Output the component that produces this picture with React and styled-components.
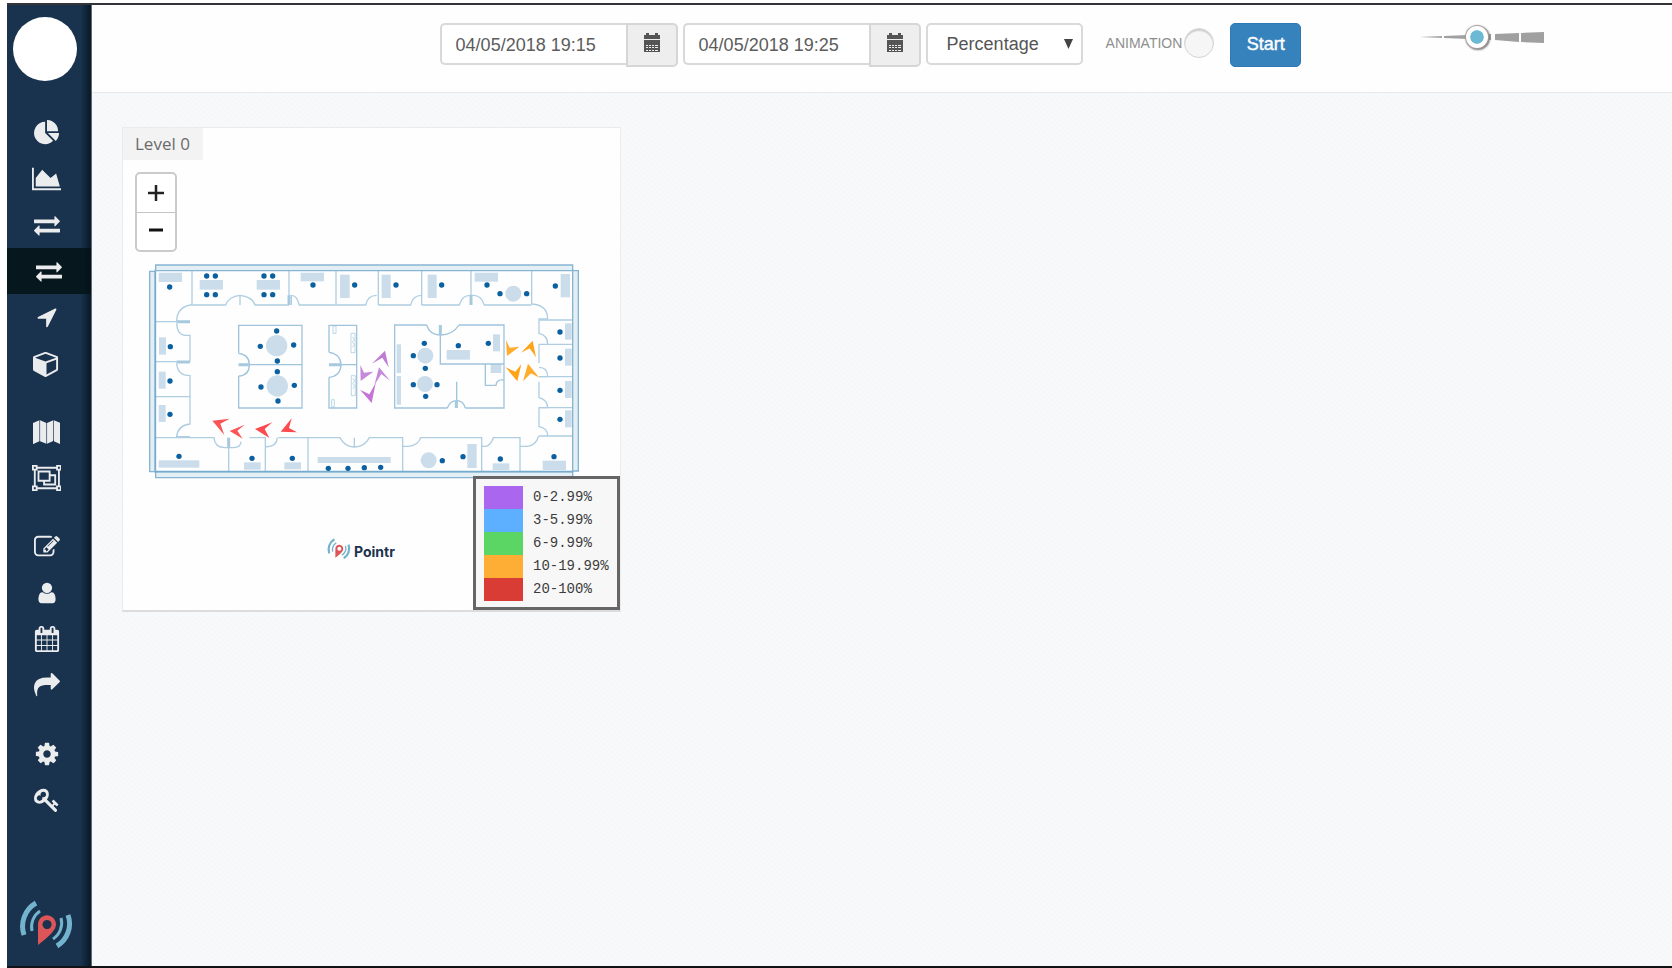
import React from "react";
import styled, { createGlobalStyle, css } from "styled-components";

const GlobalStyle = createGlobalStyle`
  *, *::before, *::after { box-sizing: border-box; }
  body {
    margin: 0;
    background: #fff;
    font-family: "Liberation Sans", Arial, sans-serif;
    color: #555;
  }
`;

const ICONS = {
  pie: { w: 1792, d: "M768 890l546 546q-106 108-247.5 168t-298.5 60q-209 0-385.5-103t-279.5-279.5-103-385.5 103-385.5 279.5-279.5 385.5-103v762zm187 6h773q0 157-60 298.5t-168 247.5zm709-128h-768v-768q209 0 385.5 103t279.5 279.5 103 385.5z" },
  area: { w: 2048, d: "M2048 1536v128h-2048v-1536h128v1408h1920zm-384-1024l256 896h-1664v-576l448-576 576 576z" },
  exchange: { w: 1792, d: "M1792 1184v192q0 13-9.5 22.5t-22.5 9.5h-1376v192q0 13-9.5 22.5t-22.5 9.5q-12 0-24-10l-319-320q-9-9-9-22 0-14 9-23l320-320q9-9 23-9 13 0 22.5 9.5t9.5 22.5v192h1376q13 0 22.5 9.5t9.5 22.5zm0-544q0 14-9 23l-320 320q-9 9-23 9-13 0-22.5-9.5t-9.5-22.5v-192h-1376q-13 0-22.5-9.5t-9.5-22.5v-192q0-13 9.5-22.5t22.5-9.5h1376v-192q0-14 9-23t23-9q12 0 24 10l319 319q9 9 9 23z" },
  arrow: { w: 1792, h: 24, d: "M1593 349l-640 1280q-17 35-57 35-5 0-15-2-22-5-35.5-22.5t-13.5-39.5v-576h-576q-22 0-39.5-13.5t-22.5-35.5 4-42 29-30l1280-640q13-7 29-7 27 0 45 19 15 14 18.5 34.5t-6.5 39.5z" },
  cube: { w: 1792, h: 27, d: "M896 1629l640-349v-636l-640 233v752zm-64-865l698-254-698-254-698 254zm832-252v768q0 35-18 65t-49 47l-704 384q-28 16-61 16t-61-16l-704-384q-31-17-49-47t-18-65v-768q0-40 23-73t61-47l704-256q22-8 44-8t44 8l704 256q38 14 61 47t23 73z" },
  map: { w: 2048, h: 24, d: "M0 220L480 20V1580L20 1790Q0 1790 0 1770ZM530 10L1000 220V1780L530 1580ZM1050 220L1510 10V1570L1050 1780ZM1560 20L2048 220V1770Q2048 1790 2028 1790L1560 1580Z" },
  group: { w: 2048, d: "M2048 384h-128v1024h128v384h-384v-128h-1280v128h-384v-384h128v-1024h-128v-384h384v128h1280v-128h384zM1792 128v128h128v-128zM128 128v128h128v-128zM256 1664v-128h-128v128zM1664 1536v-128h128v-1024h-128v-128h-1280v128h-128v1024h128v128zM1920 1664v-128h-128v128zM1280 640h384v768h-896v-256h-384v-768h896zM512 1024h640v-512h-640zM1536 1280v-512h-256v384h-384v128z" },
  edit: { w: 1792, d: "M888 1184l116-116-152-152-116 116v56h96v96h56zm440-720q-16-16-33 1l-350 350q-17 17-1 33t33-1l350-350q17-17 1-33zm80 594v190q0 119-84.5 203.5t-203.5 84.5h-832q-119 0-203.5-84.5t-84.5-203.5v-832q0-119 84.5-203.5t203.5-84.5h832q63 0 117 25 15 7 18 23 3 17-9 29l-49 49q-14 14-32 8-23-6-45-6h-832q-66 0-113 47t-47 113v832q0 66 47 113t113 47h832q66 0 113-47t47-113v-126q0-13 9-22l64-64q15-15 35-7t20 29zm-96-738l288 288-672 672h-288v-288zm444 132l-92 92-288-288 92-92q28-28 68-28t68 28l152 152q28 28 28 68t-28 68z" },
  user: { w: 1792, h: 24, d: "M1536 1399q0 109-62.5 187t-150.5 78h-854q-88 0-150.5-78t-62.5-187q0-85 8.5-160.5t31.5-152 58.5-131 94-89 134.5-34.5q131 128 313 128t313-128q76 0 134.5 34.5t94 89 58.5 131 31.5 152 8.5 160.5zm-256-887q0 159-112.5 271.5t-271.5 112.5-271.5-112.5-112.5-271.5 112.5-271.5 271.5-112.5 271.5 112.5 112.5 271.5z" },
  calendar: { w: 1792, d: "M192 1664h288v-288h-288v288zm352 0h320v-288h-320v288zm-352-352h288v-320h-288v320zm352 0h320v-320h-320v320zm-352-384h288v-288h-288v288zm736 736h320v-288h-320v288zm-384-736h320v-288h-320v288zm768 736h288v-288h-288v288zm-384-352h320v-320h-320v320zm-352-864v-288q0-13-9.5-22.5t-22.5-9.5h-64q-13 0-22.5 9.5t-9.5 22.5v288q0 13 9.5 22.5t22.5 9.5h64q13 0 22.5-9.5t9.5-22.5zm736 864h288v-320h-288v320zm-384-384h320v-288h-320v288zm384 0h288v-288h-288v288zm32-480v-288q0-13-9.5-22.5t-22.5-9.5h-64q-13 0-22.5 9.5t-9.5 22.5v288q0 13 9.5 22.5t22.5 9.5h64q13 0 22.5-9.5t9.5-22.5zm384-64v1280q0 52-38 90t-90 38h-1408q-52 0-90-38t-38-90v-1280q0-52 38-90t90-38h128v-96q0-66 47-113t113-47h64q66 0 113 47t47 113v96h384v-96q0-66 47-113t113-47h64q66 0 113 47t47 113v96h128q52 0 90 38t38 90z" },
  share: { w: 1792, d: "M1792 640q0 26-19 45l-512 512q-19 19-45 19t-45-19-19-45v-256h-224q-98 0-175.5 6t-154 21.5-133 42.5-105.5 69.5-80 101-48.5 138.5-17.5 181q0 55 5 123 0 6 2.5 23.5t2.5 26.5q0 15-8.5 25t-23.5 10q-16 0-28-17-7-9-13-22t-13.5-30-10.5-24q-127-285-127-451 0-199 53-333 162-403 875-403h224v-256q0-26 19-45t45-19 45 19l512 512q19 19 19 45z" },
  cog: { w: 1792, d: "M1152 896q0-106-75-181t-181-75-181 75-75 181 75 181 181 75 181-75 75-181zm512-109v222q0 12-8 23t-20 13l-185 28q-19 54-39 91 35 50 107 138 10 12 10 25t-9 23q-27 37-99 108t-94 71q-12 0-26-9l-138-108q-44 23-91 38-16 136-29 186-7 28-36 28h-222q-14 0-24.5-8.5t-11.5-21.5l-28-184q-49-16-90-37l-141 107q-10 9-25 9-14 0-25-11-126-114-165-168-7-10-7-23 0-12 8-23 15-21 51-66.5t54-70.5q-27-50-41-99l-183-27q-13-2-21-12.5t-8-23.5v-222q0-12 8-23t19-13l186-28q14-46 39-92-40-57-107-138-10-12-10-24 0-10 9-23 26-36 98.5-107.5t94.5-71.5q13 0 26 10l138 107q44-23 91-38 16-136 29-186 7-28 36-28h222q14 0 24.5 8.5t11.5 21.5l28 184q49 16 90 37l142-107q9-9 24-9 13 0 25 10 129 119 165 170 7 8 7 22 0 12-8 23-15 21-51 66.5t-54 70.5q26 50 41 98l183 28q13 2 21 12.5t8 23.5z" },
  key: { w: 1792, d: "M832 512q0-80-56-136t-136-56-136 56-56 136q0 42 19 83-41-19-83-19-80 0-136 56t-56 136 56 136 136 56 136-56 56-136q0-42-19-83 41 19 83 19 80 0 136-56t56-136zm851 704q0 17-49 66t-66 49q-9 0-28.5-16t-36.5-33-38.5-40-24.5-26l-96 96 220 220q28 28 28 68 0 42-39 81t-81 39q-40 0-68-28l-671-671q-176 131-365 131-163 0-265.5-102.5t-102.5-265.5q0-160 95-313t248-248 313-95q163 0 265.5 102.5t102.5 265.5q0 189-131 365l355 355 96-96q-3-3-26-24.5t-40-38.5-33-36.5-16-28.5q0-17 49-66t66-49q13 0 23 10 6 6 46 44.5t82 79.5 86.5 86 73 78 28.5 41z" },
};

const Page = styled.div`
  display: flex;
  min-height: 100vh;
  padding: 3px 0 0 7px;
`;

const Frame = styled.div`
  flex: 1;
  display: flex;
  min-width: 0;
  border-top: 2px solid #333438;
  border-bottom: 2px solid #101216;
`;

const Sidebar = styled.aside`
  flex: none;
  width: 85px;
  display: flex;
  flex-direction: column;
  padding: 12px 0 16px;
  background: linear-gradient(to right, #19324d 74px, #0a1b29 83px);
  border-right: 1px solid #5f6d78;
`;

const Avatar = styled.a`
  width: 64px;
  height: 64px;
  margin-left: 6px;
  border-radius: 50%;
  background: #fff;
`;

const Nav = styled.nav`
  display: flex;
  flex-direction: column;
  gap: 23px;
  margin-top: 29px;
`;

const NavGroup = styled.ul`
  list-style: none;
  margin: 0;
  padding: 0;
`;

const NavLink = styled.a`
  display: flex;
  align-items: center;
  justify-content: center;
  height: 46px;
  padding-right: 5px;
  ${(p) => p.$active && css`
    padding-right: 0;
    background: linear-gradient(to right, #06171e 76px, #04121a 84px);
  `}
`;

const NavIcon = styled.svg`
  height: ${(p) => p.$size}px;
  fill: #ebecee;
`;

const BrandLink = styled.a`
  display: flex;
  margin-top: auto;
  margin-left: 12px;
`;

const Main = styled.div`
  flex: 1;
  min-width: 0;
  display: flex;
  flex-direction: column;
  background: repeating-linear-gradient(45deg, #f8f9fa 0 2px, #f6f7f9 2px 4px);
`;

const Toolbar = styled.header`
  display: flex;
  align-items: flex-start;
  gap: 5px;
  min-height: 88px;
  padding: 18px 16px 18px 22%;
  background: #fefefe;
  border-bottom: 1px solid #e6e8e9;
`;

const DateGroup = styled.div`
  display: flex;
  align-items: flex-start;
`;

const DateInput = styled.input`
  width: 186px;
  height: 42px;
  padding: 2px 14px 0;
  border: 2px solid #d9d9d9;
  border-right: 0;
  border-radius: 5px 0 0 5px;
  background: #fff;
  color: #5c5c5c;
  font: 18px "Liberation Sans", Arial, sans-serif;
`;

const DateButton = styled.button`
  display: flex;
  justify-content: center;
  width: 52px;
  height: 44px;
  padding: 8px 0;
  border: 2px solid #d6d6d6;
  border-radius: 0 5px 5px 0;
  background: #eee;
`;

const SelectBox = styled.div`
  display: grid;
  align-items: center;
  width: 157px;
  & > * { grid-area: 1 / 1; }
`;

const Select = styled.select`
  appearance: none;
  width: 100%;
  height: 42px;
  padding: 0 36px 0 19px;
  border: 2px solid #d9d9d9;
  border-radius: 5px;
  background: #fff;
  color: #555;
  font: 18px "Liberation Sans", Arial, sans-serif;
`;

const Caret = styled.svg`
  justify-self: end;
  margin-right: 10px;
  pointer-events: none;
`;

const ToggleLabel = styled.label`
  display: flex;
  align-items: center;
  gap: 2px;
  height: 40px;
  margin-left: 18px;
  color: #8e8e8e;
  font-size: 14px;
`;

const Toggle = styled.input`
  appearance: none;
  width: 30px;
  height: 30px;
  margin: 0;
  border: 1px solid #d4d4d4;
  border-radius: 50%;
  background: #f6f6f6;
  box-shadow: inset 0 2px 1px #cfcfcf;
`;

const StartButton = styled.button`
  width: 71px;
  height: 44px;
  margin-left: 11px;
  padding: 0 0 2px;
  border: 1px solid #2f79b3;
  border-radius: 5px;
  background: #3682bc;
  color: #fff;
  font: 18px "Liberation Sans", Arial, sans-serif;
  -webkit-text-stroke: 0.4px #fff;
`;

const Scale = styled.div`
  display: grid;
  align-items: center;
  width: 126px;
  height: 28px;
  margin-left: 113px;
  & > * { grid-area: 1 / 1; }
`;

const Range = styled.input`
  appearance: none;
  width: 100%;
  height: 26px;
  margin: 0;
  background: transparent;
  &::-webkit-slider-thumb {
    appearance: none;
    width: 22px;
    height: 22px;
    border: 4px solid #fff;
    border-radius: 50%;
    background: #6cb9d6;
    box-shadow: 0 0 1px 1px #a89f9f, 1px 1px 2px 1px #777;
    background-clip: padding-box;
  }
`;

const Content = styled.main`
  flex: 1;
  padding: 34px 30px;
`;

const LevelCard = styled.section`
  position: relative;
  width: 499px;
  max-width: 100%;
  border: 1px solid #ebebeb;
  border-bottom: 2px solid #dcdcdc;
  background: #fefefe;
`;

const LevelOverlay = styled.div`
  position: absolute;
  top: 0;
  left: 0;
`;

const LevelTitle = styled.h2`
  width: fit-content;
  margin: 0;
  padding: 0 13px 0 12px;
  background: #f3f3f3;
  color: #6b6b6b;
  font: 400 17px/32px "Open Sans", "Noto Sans", sans-serif;
`;

const ZoomControl = styled.div`
  width: 42px;
  margin: 12px 0 0 12px;
  border: 2px solid #cbcbcb;
  border-radius: 5px;
  background: #fff;
`;

const ZoomButton = styled.button`
  display: flex;
  align-items: center;
  justify-content: center;
  width: 100%;
  height: 38px;
  padding: 0;
  border: 0;
  background: none;
  & + & {
    padding-bottom: 4px;
    border-top: 1px solid #c4c4c4;
  }
`;

const FloorPlan = styled.svg`
  display: block;
  width: 100%;
  height: auto;
`;

const Legend = styled.ul`
  position: absolute;
  right: 0;
  bottom: 0;
  width: 147px;
  margin: 0;
  padding: 7px 8px 6px;
  border: 3px solid #666;
  background: #f7f7f7;
  list-style: none;
`;

const LegendItem = styled.li`
  display: flex;
  gap: 10px;
  color: #3c3c3c;
  font: 14px/22px "Liberation Mono", monospace;
`;

const Swatch = styled.span`
  flex: none;
  width: 39px;
  height: 23px;
  background: ${(p) => p.$color};
`;

function Icon({ name }) {
  const { w, h = 26, d } = ICONS[name];
  return (
    <NavIcon $size={h} viewBox={`0 0 ${w} 1792`} fillRule={name === "group" ? "evenodd" : "nonzero"} aria-hidden="true">
      <path d={d} />
    </NavIcon>
  );
}

function Waves() {
  return (
    <>
      <g fill="none" stroke="#74b3cd">
        <path d="M17 3A27 27 0 0 0 5 35" strokeWidth="5" />
        <path d="M21 11A19 19 0 0 0 13 31" strokeWidth="3" />
        <path d="M42 18A19 19 0 0 1 34 39" strokeWidth="3" />
        <path d="M49 15A26 26 0 0 1 38 46" strokeWidth="5" />
      </g>
      <path fill="#dc5558" fillRule="evenodd" d="M19 45V25A9 9 0 1 1 35 30Q32 35 19 45ZM28 20a4.500 4.500 0 1 0 .1 0Z" />
    </>
  );
}

const NAV = [
  [["pie", "Overview"], ["area", "Analytics"], ["exchange", "Flows"], ["exchange", "Directions", true], ["arrow", "Location"], ["cube", "Assets"]],
  [["map", "Maps"], ["group", "Zones"]],
  [["edit", "Edit"], ["user", "Users"], ["calendar", "Calendar"], ["share", "Share"]],
  [["cog", "Settings"], ["key", "Keys"]],
];

const LEGEND = [
  ["#ab66ef", "0-2.99%"],
  ["#5cb0ff", "3-5.99%"],
  ["#5bd563", "6-9.99%"],
  ["#ffae35", "10-19.99%"],
  ["#d93c35", "20-100%"],
];

function DateField({ label, value }) {
  return (
    <DateGroup>
      <DateInput type="text" aria-label={label} defaultValue={value} />
      <DateButton type="button" aria-label={`Pick ${label}`}>
        <svg width="18" height="20" viewBox="0 0 18 20" fill="#555">
          <path d="M1 2h2V0h3v2h6V0h3v2h2v4H1z" />
          <path fillRule="evenodd" d="M1 7h16v12H1zM3 12v1h2v-1zM6 12v1h2v-1zM9 12v1h2v-1zM12 12v1h3v-1zM3 14v1h2v-1zM6 14v1h2v-1zM9 14v1h2v-1zM12 14v1h3v-1zM3 17v1h2v-1zM6 17v1h2v-1zM9 17v1h2v-1zM12 17v1h3v-1z" />
        </svg>
      </DateButton>
    </DateGroup>
  );
}

const WALLS = [
  "M45 45H1298V650H45Z",
  "M156 45V150M447 45V150M588 45V150M715 45V150M845 45V150M993 45V150M1175 45V147",
  "M150 150H257A50 36 0 0 1 300 121A50 36 0 0 1 345 150H447M300 121V150M454 150V121Q471 121 478 150H677Q683 121 710 121M715 150H812Q818 121 845 121M845 150H958Q966 121 990 121H1000Q1024 121 1033 150H1175",
  "M1175 147Q1223 150 1223 192H1197V235Q1223 240 1223 268M1197 268V325M1197 337Q1223 337 1223 365H1197M1197 380V428Q1223 435 1223 458H1197V515Q1223 519 1223 543",
  "M1197 195H1298M1197 268H1298M1197 365H1298M1197 458H1298M1197 543H1298",
  "M150 150Q110 158 110 200M45 200H150M110 205Q112 241 136 241H150V320M45 320H150M110 325Q112 362 150 362V507Q113 511 110 545H150M45 425H150",
  "M45 548H222Q224 578 255 578H280Q303 576 303 560M266 548V650M328 548H376V650M376 575Q410 577 412 548M415 548H600Q614 576 643 576Q674 576 688 548H788V650M643 548V576M504 548V650",
  "M788 574H806Q835 571 842 548H1025V650M1025 574H1038Q1052 570 1060 548H1140V650M1140 574H1162Q1188 571 1196 543",
];

const ROOMS = [
  "M296 295V211H486V459H296V363M296 329H486M296 295Q328 299 328 329Q328 361 296 363",
  "M567 292V211H650V459H567V367M567 329H650M567 292Q602 297 603 329Q602 363 567 367",
  "M860 210H764V459H922M976 459H1092V210H957M901 210V327H1092M950 380V459M860 210Q869 240 901 240Q938 240 957 210M922 459Q930 437 950 437Q970 437 976 459M1036 327V391H1068Q1069 374 1090 374",
];

const DESKS = [
  [56, 53, 70, 28], [179, 75, 70, 29], [350, 75, 70, 29], [482, 53, 70, 26], [600, 59, 29, 70], [725, 59, 27, 70], [863, 59, 27, 70], [1004, 53, 70, 27], [1262, 57, 28, 70],
  [57, 247, 21, 52], [56, 350, 21, 51], [56, 450, 21, 51], [56, 616, 122, 22], [312, 622, 50, 22], [433, 622, 50, 21], [533, 606, 219, 18],
  [982, 567, 28, 72], [1058, 625, 50, 20], [1208, 617, 70, 28], [1275, 205, 20, 49], [1275, 281, 20, 51], [1275, 378, 20, 51], [1275, 466, 20, 51],
  [770, 268, 13, 86], [770, 363, 13, 86], [920, 285, 70, 29], [1059, 238, 21, 51], [1052, 327, 32, 27],
];

const TABLES = [[410, 272, 32], [412, 393, 32], [1120, 116, 24], [856, 302, 24], [855, 387, 24], [866, 616, 24]];

const SEATS = [
  [89, 96], [200, 63], [226, 63], [200, 119], [226, 119], [372, 63], [398, 63], [372, 119], [398, 119], [519, 90], [644, 90], [768, 90], [905, 90], [1041, 90], [1080, 116], [1160, 116], [1246, 93],
  [91, 275], [90, 378], [90, 478], [117, 604], [336, 610], [457, 610], [565, 640], [624, 640], [673, 638], [722, 637], [907, 617], [969, 605], [1081, 612], [1242, 605],
  [1260, 231], [1260, 309], [1260, 406], [1260, 493],
  [410, 228], [361, 274], [461, 270], [412, 318], [412, 350], [363, 396], [463, 391], [414, 438],
  [853, 265], [820, 302], [856, 340], [820, 389], [891, 389], [857, 424], [955, 272], [1045, 265],
];

const FLOWS = [
  ["#fb5356", "217,497 269,491 241,506 253,540"],
  ["#fb5356", "269,528 314,509 292,527 308,551"],
  ["#fb4b4e", "345,522 397,502 374,522 388,549"],
  ["#fb4b4e", "422,530 455,490 447,519 471,532"],
  ["#be7bd5", "696,326 735,287 746,337 727,308"],
  ["#c58bdb", "661,330 672,353 700,350 662,378"],
  ["#c58bdb", "717,337 751,378 724,357 703,391"],
  ["#c673d6", "660,404 688,418 707,384 695,444"],
  ["#ffac2b", "1098,255 1109,278 1138,275 1101,303"],
  ["#ffa317", "1143,293 1178,257 1188,307 1169,280"],
  ["#ffa317", "1097,337 1126,350 1144,328 1132,379"],
  ["#ffac2b", "1164,326 1198,368 1173,355 1149,379"],
];

function LevelMap() {
  return (
    <FloorPlan viewBox="123 128 497 482" role="img" aria-label="Floor plan of level 0">
      <g transform="translate(140 255) scale(.33333)">
        <g fill="#cbddea">
          {DESKS.map(([x, y, w, h]) => <rect key={`${x}-${y}`} x={x} y={y} width={w} height={h} />)}
          {TABLES.map(([x, y, r]) => <circle key={`${x}-${y}`} cx={x} cy={y} r={r} />)}
        </g>
        <g fill="none" stroke="#afcee1" strokeWidth="4">
          {WALLS.map((d) => <path key={d} d={d} />)}
        </g>
        <g fill="none" stroke="#9fc4dc" strokeWidth="4">
          {ROOMS.map((d) => <path key={d} d={d} />)}
          <path d="M579 213h9v22h-9zM575 434h8v22h-8zM633 235h12v58h-12zM637 245l6 8-6 8 6 8-6 8M634 362h12v60h-12zM638 370l6 8-6 8 6 8-6 8" strokeWidth="2" />
        </g>
        <path d="M110 200H150M110 321H150M266 548V577M447 121V150M993 121V150M296 329H326M567 329H601M901 210V240M949 437V459" stroke="#a7c9de" strokeWidth="9" />
        <g fill="#e4eef5" stroke="#86b5d2" strokeWidth="4">
          <path d="M47 30H1298V47H47ZM47 650H1298V668H47ZM29 49H46V650H29ZM1298 47H1315V648H1298Z" />
        </g>
        <path d="M46 49V650H1298" fill="none" stroke="#76abcd" strokeWidth="5" />
        <g fill="#0a60a0">
          {SEATS.map(([x, y]) => <circle key={`${x}-${y}`} cx={x} cy={y} r="8" />)}
        </g>
        {FLOWS.map(([fill, points]) => <polygon key={points} fill={fill} points={points} />)}
      </g>
      <g transform="translate(327 538) scale(.44)"><Waves /></g>
      <text x="354" y="557" fill="#1c3350" fontFamily="Inter, sans-serif" fontWeight="700" fontSize="14">Pointr</text>
    </FloorPlan>
  );
}

export default function App() {
  return (
    <>
      <GlobalStyle />
      <Page>
        <Frame>
          <Sidebar>
            <Avatar href="#profile" aria-label="Profile" />
            <Nav aria-label="Main">
              {NAV.map((items, i) => (
                <NavGroup key={i}>
                  {items.map(([icon, label, active]) => (
                    <li key={label}>
                      <NavLink href={`#${label.toLowerCase()}`} aria-label={label} $active={active} aria-current={active ? "page" : undefined}>
                        <Icon name={icon} />
                      </NavLink>
                    </li>
                  ))}
                </NavGroup>
              ))}
            </Nav>
            <BrandLink href="#home" aria-label="Pointr home">
              <svg width="56" height="50" viewBox="0 0 56 50"><Waves /></svg>
            </BrandLink>
          </Sidebar>
          <Main>
            <Toolbar>
              <DateField label="start date" value="04/05/2018 19:15" />
              <DateField label="end date" value="04/05/2018 19:25" />
              <SelectBox>
                <Select aria-label="Unit" defaultValue="Percentage">
                  <option>Percentage</option>
                  <option>Count</option>
                </Select>
                <Caret width="9" height="10" viewBox="0 0 9 10"><path fill="#444" d="M0 0h9L4.500 10z" /></Caret>
              </SelectBox>
              <ToggleLabel>
                ANIMATION
                <Toggle type="checkbox" />
              </ToggleLabel>
              <StartButton type="button">Start</StartButton>
              <Scale>
                <svg width="126" height="28" viewBox="0 0 126 28" aria-hidden="true">
                  <defs>
                    <linearGradient id="fade"><stop stopColor="#fff" /><stop offset="1" stopColor="#a5a5a5" /></linearGradient>
                  </defs>
                  <path fill="url(#fade)" d="M0 13h23v2H0z" />
                  <path fill="#a0a0a0" d="M25 13l24-1v4l-24-1zM66 11h6v6h-6zM76 11l24-1v9l-24-2zM102 10l23-1v11l-23-1z" />
                </svg>
                <Range type="range" min="0" max="100" defaultValue="45" aria-label="Arrow size" />
              </Scale>
            </Toolbar>
            <Content>
              <LevelCard>
                <LevelMap />
                <LevelOverlay>
                  <LevelTitle>Level 0</LevelTitle>
                  <ZoomControl>
                    <ZoomButton type="button" aria-label="Zoom in">
                      <svg width="16" height="16" viewBox="0 0 16 16"><path d="M0 8H16M8 0V16" stroke="#222" strokeWidth="2.500" /></svg>
                    </ZoomButton>
                    <ZoomButton type="button" aria-label="Zoom out">
                      <svg width="14" height="4" viewBox="0 0 14 4"><path d="M0 2H14" stroke="#111" strokeWidth="3" /></svg>
                    </ZoomButton>
                  </ZoomControl>
                </LevelOverlay>
                <Legend>
                  {LEGEND.map(([color, label]) => (
                    <LegendItem key={label}><Swatch $color={color} />{label}</LegendItem>
                  ))}
                </Legend>
              </LevelCard>
            </Content>
          </Main>
        </Frame>
      </Page>
    </>
  );
}
